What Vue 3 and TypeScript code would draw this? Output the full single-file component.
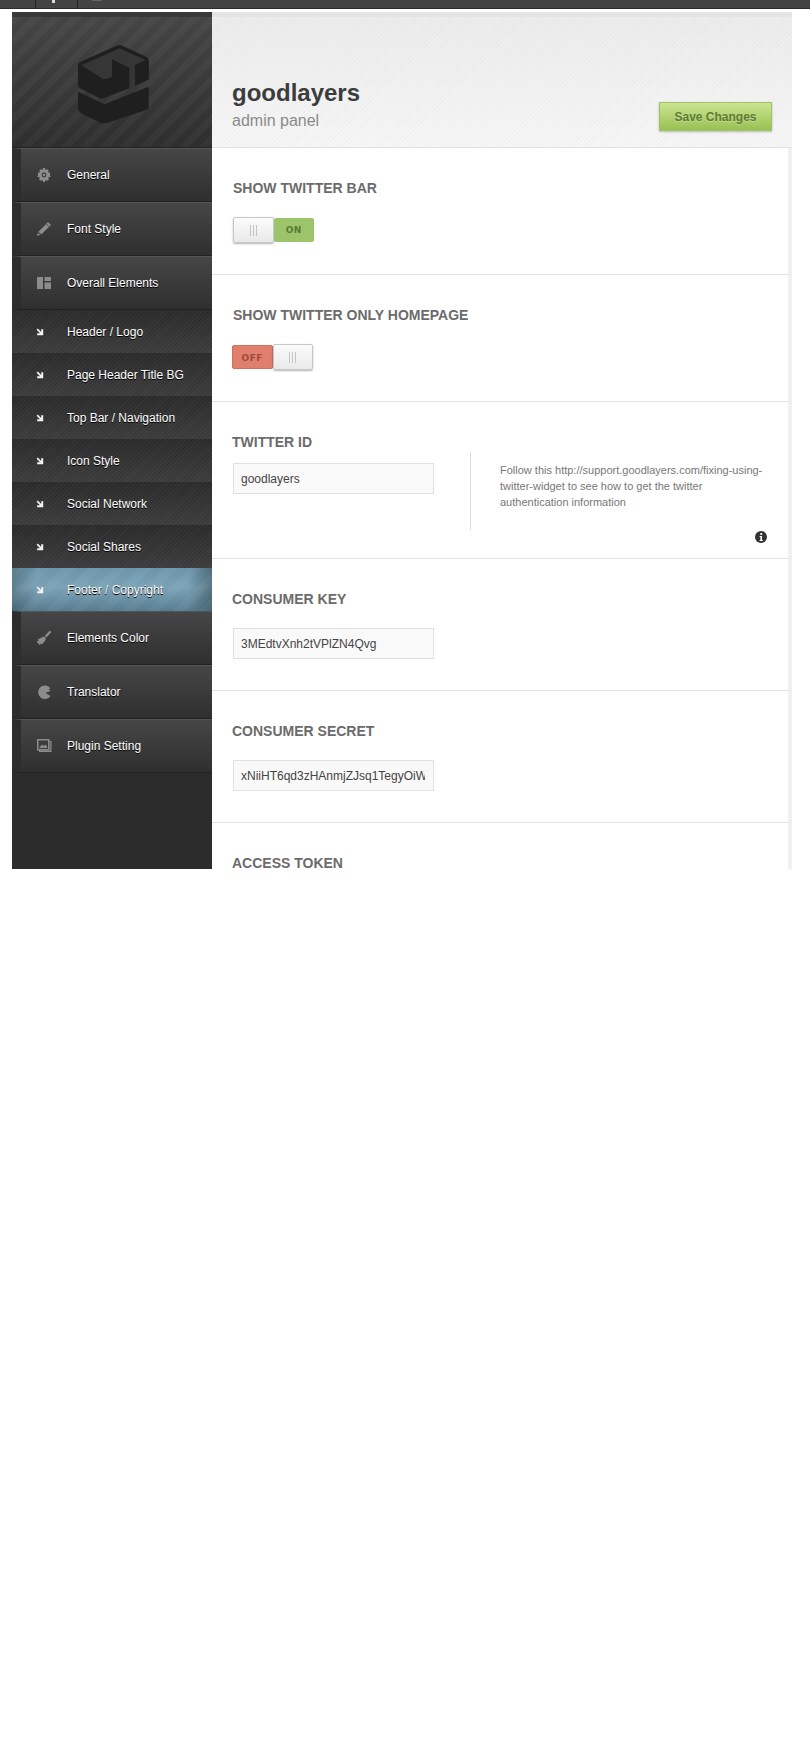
<template>
  <div class="page">
    <div class="topbar">
      <span class="tab"></span>
      <span class="tab"><i class="tab-glyph"></i></span>
      <span class="tab tab-last"><i class="tab-blur"></i></span>
    </div>

    <div class="panel">
      <aside class="sidebar">
        <div class="logo">
          <svg class="logo-mark" viewBox="0 0 270 285" width="90" height="95">
            <path class="logo-dark" d="M36 90Q36 84 44 80L152 32Q161 28 170 33L238 64Q248 69 248 78V133L207 152V160H190L112 190Q106 192 100 189L42 160Q36 157 36 150Z" />
            <path class="logo-face" d="M46 91L161 40L238 75L207 90V165H190V98L138 73V122Q138 128 128 130Q115 135 105 128Z" />
            <path class="logo-dark" d="M207 97L248 78V133L207 152Z" />
            <path class="logo-dark" d="M36 170L115 208L248 155V215Q248 222 240 225L130 262Q115 268 100 262L45 235Q36 230 36 222Z" />
          </svg>
        </div>

        <nav>
          <template v-for="item in menu" :key="item.label">
            <a class="menu-item">
              <span class="menu-icon">
                <svg viewBox="0 0 16 16" width="16" height="16" v-html="icons[item.icon]"></svg>
              </span>
              {{ item.label }}
            </a>
            <a
              v-for="sub in item.children"
              :key="sub"
              class="sub-item"
              :class="{ active: sub === activeSub }"
            >
              <span class="menu-icon">
                <svg viewBox="0 0 8 8" width="8" height="8">
                  <path d="M0.6 1.8L1.8 0.6L5.2 4V1.2H7.2V7.2H1.2V5.2H4Z" fill="#f2f2f2" />
                </svg>
              </span>
              {{ sub }}
            </a>
          </template>
        </nav>
      </aside>

      <main class="main">
        <header class="head">
          <div class="brand">
            <h1>goodlayers</h1>
            <p>admin panel</p>
          </div>
          <button class="save" type="button">Save Changes</button>
        </header>

        <section
          v-for="row in rows"
          :key="row.title"
          class="row"
          :class="row.kind === 'toggle' ? 'row-toggle' : row.help ? 'row-help' : 'row-input'"
        >
          <h2 :class="{ indent: row.indent }">{{ row.title }}</h2>

          <div v-if="row.kind === 'toggle'" class="switch" :class="row.on ? 'is-on' : 'is-off'">
            <span class="state">{{ row.on ? 'ON' : 'OFF' }}</span>
            <span class="knob"><i></i><i></i><i></i></span>
          </div>

          <div v-else class="field">
            <input class="text-input" type="text" :value="row.value" readonly />
            <div v-if="row.help" class="help">
              <p>{{ row.help }}</p>
              <svg class="info" viewBox="0 0 12 12" width="12" height="12">
                <circle cx="6" cy="6" r="6" fill="#333" />
                <circle cx="6.2" cy="3" r="1.1" fill="#fff" />
                <path d="M4.6 5H7V9H7.8V10H4.6V9H5.4V6H4.6Z" fill="#fff" />
              </svg>
            </div>
          </div>
        </section>
      </main>
    </div>
  </div>
</template>

<script setup lang="ts">
type IconName = 'gear' | 'pencil' | 'layout' | 'brush' | 'pacman' | 'picture'

interface MenuItem {
  label: string
  icon: IconName
  children?: string[]
}

interface Row {
  title: string
  kind: 'toggle' | 'input'
  on?: boolean
  indent?: boolean
  value?: string
  help?: string
}

const icons: Record<IconName, string> = {
  gear: '<path fill-rule="evenodd" fill="#8c8c8c" d="M7 1H9L9.4 3L11.2 2.2L12.8 3.6L11.9 5.3L14 5.8V8.2L14.9 9.6L12.2 10.6L12.9 12.4L11.4 13.8L9.5 13L9 15H7L6.5 13L4.6 13.8L3.1 12.4L3.8 10.6L1.1 9.6L2 8.2V5.8L4.1 5.3L3.2 3.6L4.8 2.2L6.6 3ZM8 5.6A2.4 2.4 0 1 0 8 10.4A2.4 2.4 0 1 0 8 5.6Z"/><circle cx="8" cy="8" r="1.3" fill="#8c8c8c"/>',
  pencil: '<path fill="#8c8c8c" d="M12 1L15 4L5.5 13.2L2.2 11ZM1.6 12L4.4 13.8L1 15Z"/><path fill="#5a5a5a" d="M10.4 2.6L13.4 5.4L12.8 6L9.8 3.2Z"/>',
  layout: '<path fill="#8c8c8c" d="M1 2H7V14H1ZM8.5 2H15V6H8.5ZM8.5 7.5H15V14H8.5Z"/>',
  brush: '<path fill="#8c8c8c" d="M13.8 0.5L15.4 2L10.4 7.6L8.6 6Z"/><path fill="#8c8c8c" d="M8 6.6L10 8.6L8.6 11.6L5.6 14.6L4.6 13.4L3.6 15L0.6 11.4L2.8 10.6L1.8 9.4L5 7.8Z"/>',
  pacman: '<path fill="#8c8c8c" d="M14.4 4.2A6.8 6.8 0 1 0 14.6 12L9.4 8.8L14.9 6.9L12.6 5.4Z"/>',
  picture: '<path fill="#8c8c8c" d="M1 1H13.5V3H15.5V14H3V12.5H1ZM2.5 2.5V11H12V2.5Z"/><path fill="#8c8c8c" d="M3.5 9.5L6 6.5L8 8L9.5 6.5L11 8.5V10H3.5Z"/><path fill="#666" d="M13 4V12.5H4V13H14.5V4Z"/>',
}

const menu: MenuItem[] = [
  { label: 'General', icon: 'gear' },
  { label: 'Font Style', icon: 'pencil' },
  {
    label: 'Overall Elements',
    icon: 'layout',
    children: [
      'Header / Logo',
      'Page Header Title BG',
      'Top Bar / Navigation',
      'Icon Style',
      'Social Network',
      'Social Shares',
      'Footer / Copyright',
    ],
  },
  { label: 'Elements Color', icon: 'brush' },
  { label: 'Translator', icon: 'pacman' },
  { label: 'Plugin Setting', icon: 'picture' },
]

const activeSub = 'Footer / Copyright'

const rows: Row[] = [
  { title: 'SHOW TWITTER BAR', kind: 'toggle', on: true, indent: true },
  { title: 'SHOW TWITTER ONLY HOMEPAGE', kind: 'toggle', on: false, indent: true },
  {
    title: 'TWITTER ID',
    kind: 'input',
    value: 'goodlayers',
    help: 'Follow this http://support.goodlayers.com/fixing-using-twitter-widget to see how to get the twitter authentication information',
  },
  { title: 'CONSUMER KEY', kind: 'input', value: '3MEdtvXnh2tVPlZN4Qvg' },
  { title: 'CONSUMER SECRET', kind: 'input', value: 'xNiiHT6qd3zHAnmjZJsq1TegyOiWk8sLd2Vb' },
  { title: 'ACCESS TOKEN', kind: 'input', value: '' },
]
</script>

<style>
html,
body {
  margin: 0;
  background: #fff;
}
</style>

<style scoped>
.page {
  min-height: 1748px;
  background: #fff;
  font-family: "Liberation Sans", Arial, sans-serif;
}

.topbar {
  display: flex;
  height: 9px;
  background: #434343;
  border-bottom: 1px solid #2c2c2c;
  box-sizing: border-box;
}

.tab {
  position: relative;
  width: 36px;
  border-right: 1px solid #222;
  box-sizing: border-box;
  flex: none;
}

.tab:nth-child(2) {
  width: 42px;
}

.tab-last {
  width: auto;
  flex: 1;
  border-right: 0;
}

.tab-glyph {
  position: absolute;
  left: 16px;
  top: 0;
  width: 3px;
  height: 3px;
  background: #ddd;
}

.tab-blur {
  position: absolute;
  left: 14px;
  top: 0;
  width: 10px;
  height: 1px;
  background: #666;
}

.panel {
  display: flex;
  width: 780px;
  height: 857px;
  margin: 3px 0 0 12px;
  overflow: hidden;
}

.sidebar {
  width: 200px;
  flex: none;
  background: #2c2c2c;
}

.logo {
  display: flex;
  height: 130px;
  justify-content: center;
  align-items: flex-start;
  padding-top: 0;
  border-top: 5px solid #3a3a3a;
  box-sizing: content-box;
  background:
    repeating-linear-gradient(135deg, rgba(255, 255, 255, 0.025) 0 7px, rgba(0, 0, 0, 0.03) 7px 14px),
    linear-gradient(#474747, #303030);
  border-bottom: 1px solid #222;
}

.logo-mark {
  margin-top: 18px;
  margin-left: -2px;
}

.logo-dark {
  fill: #1f1f1f;
}

.logo-face {
  fill: #363636;
}

.menu-item,
.sub-item {
  display: flex;
  align-items: center;
  color: #fff;
  font-size: 12px;
  text-shadow: 0 1px 0 #000;
  box-sizing: border-box;
}

.menu-icon {
  display: flex;
  width: 55px;
  flex: none;
  justify-content: center;
  padding-right: 1px;
  box-sizing: border-box;
}

.menu-item {
  height: 54px;
  padding-bottom: 1px;
  border-top: 1px solid #555;
  border-bottom: 1px solid #222;
  border-left: 9px solid #2d2d2d;
  background: linear-gradient(#464646, #2f2f2f);
}

.menu-item .menu-icon {
  width: 46px;
  padding-right: 0;
  margin-left: 0;
}

.sub-item {
  height: 43px;
  background:
    repeating-linear-gradient(135deg, rgba(255, 255, 255, 0.035) 0 1px, transparent 1px 3px),
    linear-gradient(#2b2b2b, #3c3c3c);
}

.sub-item .menu-icon {
  padding-left: 2px;
}

.sub-item.active {
  background:
    repeating-linear-gradient(135deg, rgba(255, 255, 255, 0.04) 0 9px, transparent 9px 18px),
    linear-gradient(90deg, rgba(40, 60, 70, 0.35), transparent 12%, transparent 88%, rgba(40, 60, 70, 0.45)),
    linear-gradient(#6b95aa, #7ba2b6 45%, #587d90);
}

.main {
  flex: 1;
  min-width: 0;
  background: #fff;
}

.head {
  display: flex;
  height: 130px;
  justify-content: space-between;
  align-items: flex-end;
  padding: 0 20px 16px 20px;
  box-sizing: border-box;
  height: 136px;
  border-top: 5px solid #e4e4e4;
  border-bottom: 1px solid #e2e2e2;
  background:
    repeating-linear-gradient(135deg, rgba(0, 0, 0, 0.018) 0 1px, transparent 1px 3px),
    linear-gradient(#ececec, #f6f6f6);
}

.brand h1 {
  margin: 0;
  color: #3c3c3c;
  font-size: 24px;
  line-height: 28px;
  font-weight: 700;
}

.brand p {
  margin: 4px 0 0;
  color: #8a8a8a;
  font-size: 16px;
  line-height: 20px;
}

.save {
  width: 113px;
  height: 29px;
  padding: 0;
  margin-bottom: 0;
  border: 1px solid #a2c268;
  background: linear-gradient(#cbe592, #98c153);
  box-shadow: 0 1px 2px rgba(0, 0, 0, 0.25);
  color: #5f7a34;
  font-family: inherit;
  font-size: 12px;
  font-weight: 700;
  text-shadow: 0 1px 0 rgba(255, 255, 255, 0.3);
}

.row {
  box-sizing: border-box;
  padding: 32px 0 0 21px;
  border-right: 4px solid #f0f0f0;
  border-bottom: 1px solid #e3e3e3;
}

.row-toggle {
  height: 127px;
}

.row-help {
  height: 157px;
}

.row-input {
  height: 132px;
}

h2 {
  margin: 0 0 0 -1px;
  color: #6b6b6b;
  font-size: 14px;
  line-height: 16px;
  font-weight: 700;
}

h2.indent {
  margin-left: 0;
}

.switch {
  display: flex;
  align-items: center;
  width: 81px;
  height: 26px;
  margin-top: 21px;
}

.state {
  width: 41px;
  height: 24px;
  line-height: 24px;
  text-align: center;
  font-family: "DejaVu Sans", sans-serif;
  font-size: 9px;
  font-weight: 700;
  letter-spacing: 0.5px;
  box-sizing: border-box;
  border-radius: 2px;
}

.knob {
  display: flex;
  width: 41px;
  height: 26px;
  gap: 2px;
  justify-content: center;
  align-items: center;
  box-sizing: border-box;
  border: 1px solid #c8c8c8;
  border-radius: 2px;
  background: linear-gradient(#fbfbfb, #e9e9e9);
  box-shadow: 0 1px 2px rgba(0, 0, 0, 0.3);
}

.knob i {
  width: 1px;
  height: 11px;
  background: #c4c4c4;
}

.is-on {
  flex-direction: row-reverse;
  justify-content: flex-end;
}

.is-on .state {
  background: #9cc46a;
  color: #587a35;
}

.is-off {
  margin-left: -1px;
}

.is-off .state {
  background: #e07f6e;
  color: #a3493b;
  border: 1px solid #d06f5f;
}

.field {
  display: flex;
  align-items: flex-start;
  margin-top: 13px;
}

.row-help .field {
  margin-top: 2px;
}

.text-input {
  width: 201px;
  height: 31px;
  padding: 0 8px 0 7px;
  flex: none;
  box-sizing: border-box;
  border: 1px solid #e0e0e0;
  background: #f9f9f9;
  color: #444;
  font-family: inherit;
  font-size: 12px;
  outline: none;
  border-radius: 0;
}

.row-input .field {
  margin-top: 21px;
}

.row-help .text-input {
  margin-top: 11px;
}

.help {
  position: relative;
  width: 265px;
  height: 68px;
  margin-left: 36px;
  padding: 10px 0 0 29px;
  box-sizing: content-box;
  border-left: 1px solid #dedede;
}

.help p {
  margin: 0;
  color: #777;
  font-size: 11px;
  line-height: 16px;
}

.info {
  position: absolute;
  right: -2px;
  bottom: -13px;
}
</style>
